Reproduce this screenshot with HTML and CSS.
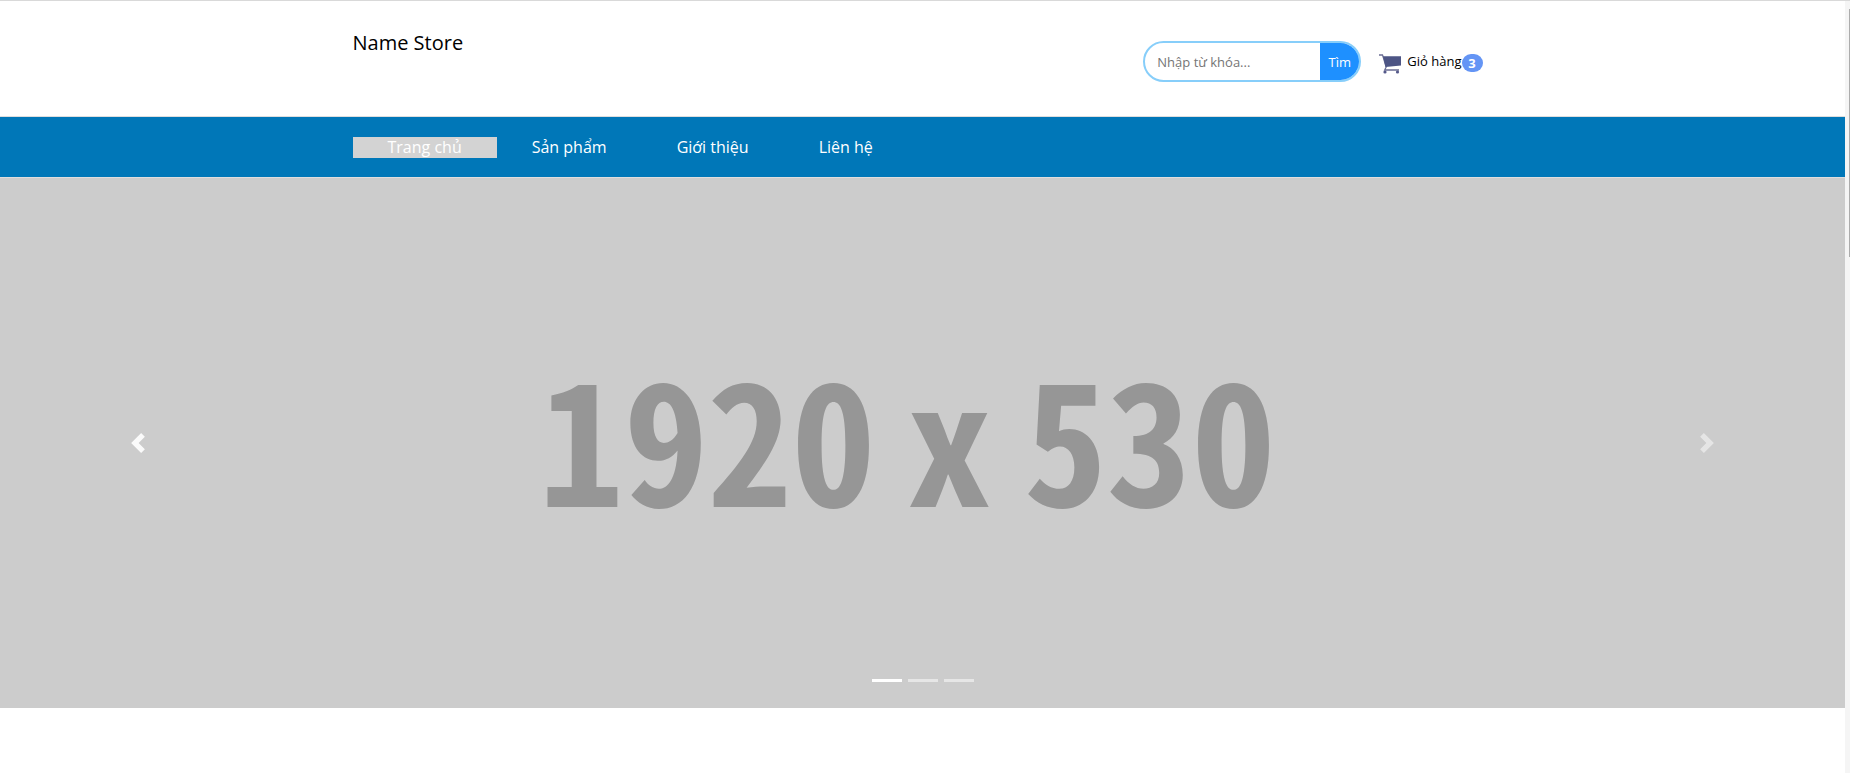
FILE: index.html
```html
<!DOCTYPE html>
<html lang="vi">
<head>
<meta charset="utf-8">
<title>Name Store</title>
<link rel="stylesheet" href="styles.css">
</head>
<body>
<div class="page">
  <header class="header">
    <div class="container header-row">
      <a class="brand" href="#">Name Store</a>
      <div class="tools">
        <form class="search">
          <input class="search-input" type="text" placeholder="Nhập từ khóa..." aria-label="Nhập từ khóa">
          <button class="search-button" type="button">Tìm</button>
        </form>
        <a class="cart" href="#">
          <svg class="cart-icon" viewBox="0 0 24 20" aria-hidden="true">
            <path d="M1 1h3.500l1 3 2.700 9-1.500 3H21" fill="none" stroke="#6b6e94" stroke-width="1.300"/>
            <path d="M5 2.300h18V11.500l-15.500 1.500z" fill="#4d5585"/>
            <circle cx="7" cy="18" r="1.600" fill="#54598a"/>
            <circle cx="19.500" cy="18" r="1.600" fill="#54598a"/>
          </svg>
          <span class="cart-label">Giỏ hàng</span><span class="badge">3</span>
        </a>
      </div>
    </div>
  </header>
  <nav class="nav">
    <div class="container nav-row">
      <a class="nav-link active" href="#">Trang chủ</a>
      <a class="nav-link" href="#">Sản phẩm</a>
      <a class="nav-link" href="#">Giới thiệu</a>
      <a class="nav-link" href="#">Liên hệ</a>
    </div>
  </nav>
  <main class="carousel">
    <button class="control" type="button" aria-label="Previous">
      <svg class="chevron" viewBox="0 0 8 8" aria-hidden="true"><path d="M5.250 0l-4 4 4 4 1.500-1.500L4.250 4l2.500-2.500L5.250 0z"/></svg>
    </button>
    <div class="slide"><span>1920</span> <span>x</span> <span>530</span></div>
    <button class="control next" type="button" aria-label="Next">
      <svg class="chevron" viewBox="0 0 8 8" aria-hidden="true"><path d="M2.750 0l-1.500 1.500L3.750 4l-2.500 2.500L2.750 8l4-4-4-4z"/></svg>
    </button>
    <div class="indicators">
      <button class="dot current" type="button" aria-label="Slide 1"></button>
      <button class="dot" type="button" aria-label="Slide 2"></button>
      <button class="dot" type="button" aria-label="Slide 3"></button>
    </div>
  </main>
</div>
<div class="scrollbar"><div class="thumb"></div></div>
</body>
</html>
```
FILE: styles.css
```css
* { box-sizing: border-box; }
body {
  margin: 0;
  min-height: 100vh;
  display: flex;
  border-top: 1px solid #d9d9d9;
  background: #fff;
  color: #000;
  font-family: "Open Sans", "Noto Sans", sans-serif;
  font-size: 13px;
}
a { color: inherit; text-decoration: none; }
button { border: 0; padding: 0; background: none; font: inherit; cursor: pointer; }
.page { flex: 1; min-width: 0; }
.container { width: 100%; max-width: 1140px; margin: 0 auto; }
.header { border-bottom: 1px solid #dedede; }
.header-row {
  display: flex;
  justify-content: space-between;
  align-items: flex-start;
  min-height: 115px;
  padding: 28px 10px 0 0;
}
.brand { font-size: 20px; line-height: 28px; }
.tools { display: flex; align-items: center; gap: 17px; padding-top: 12px; }
.search {
  display: flex;
  width: 218px;
  height: 41px;
  border: 2px solid #87cefa;
  border-radius: 21px;
  overflow: hidden;
}
.search-input {
  flex: 1;
  min-width: 0;
  border: 0;
  padding: 0 12px;
  background: none;
  font: inherit;
  outline: none;
}
.search-input::placeholder { color: #757575; }
.search-button { width: 39px; background: #1e90ff; color: #fff; }
.cart { display: flex; align-items: center; }
.cart-icon { width: 24px; height: 20px; margin-right: 5px; margin-top: 4px; }
.cart-label { padding-bottom: 2px; }
.badge {
  width: 21px;
  margin-top: 2px;
  border-radius: 9px;
  background: #6495f5;
  color: #fff;
  font-weight: 700;
  line-height: 18px;
  text-align: center;
}
.nav { background: #0077b8; border-bottom: 1px solid #dedede; }
.nav-row { display: flex; padding: 20px 0 19px; }
.nav-link { padding: 0 35px; color: #fff; font-size: 16px; line-height: 21px; }
.nav-link.active { background: #d3d3d3; }
.carousel {
  position: relative;
  display: flex;
  height: 530px;
  background: #ccc;
}
.control { width: 15%; display: flex; align-items: center; justify-content: center; opacity: 0.9; }
.control.next { opacity: 0.5; }
.chevron { width: 20px; height: 20px; fill: #fff; }
.slide {
  flex: 1;
  display: flex;
  align-items: center;
  justify-content: center;
  gap: 32px;
  padding: 0 30px 18px 0;
  color: #969696;
  font-family: "Noto Sans Mono CJK JP", "Noto Sans Mono CJK SC", "Liberation Mono", monospace;
  font-size: 168px;
  font-weight: 700;
  line-height: 1;
  white-space: nowrap;
}
.indicators {
  position: absolute;
  left: 0;
  right: 0;
  bottom: 26px;
  display: flex;
  justify-content: center;
  gap: 6px;
}
.dot { width: 30px; height: 3px; background: #fff; opacity: 0.5; }
.dot.current { opacity: 1; }
.scrollbar { width: 5px; padding: 8px 0 0 4px; background: #f5f5f5; }
.thumb { height: 248px; background: #acacac; }
```
